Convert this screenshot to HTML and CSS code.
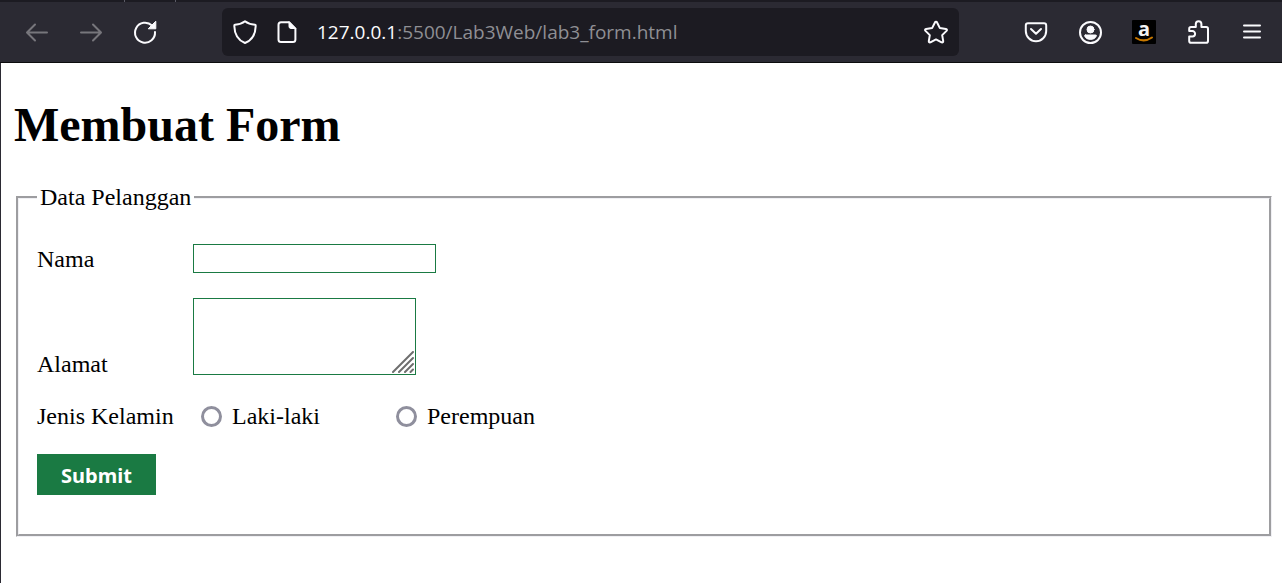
FILE: index.html
```html
<!DOCTYPE html>
<html lang="id">
<head>
<meta charset="utf-8">
<title>Membuat Form</title>
<link rel="stylesheet" href="styles.css">
</head>
<body>
<div class="tabstrip"><div class="tab-edge"></div></div>
<header class="toolbar">
  <nav class="nav-buttons" aria-label="Navigasi">
    <button class="icon-button dim" type="button" aria-label="Kembali">
      <svg width="24" height="24" viewBox="0 0 24 24"><path d="M22 12.500H2.500M10 4.500l-8 8 8 8"/></svg>
    </button>
    <button class="icon-button dim" type="button" aria-label="Maju">
      <svg width="24" height="24" viewBox="0 0 24 24"><path d="M2 12.500h19.500M14 4.500l8 8-8 8"/></svg>
    </button>
    <button class="icon-button" type="button" aria-label="Muat ulang">
      <svg width="24" height="24" viewBox="0 0 24 24"><path d="M19 5.500A10 10 0 1 0 22 12"/><path class="solid" d="M22.800 1.600v7.200h-7.200z"/></svg>
    </button>
  </nav>
  <div class="urlbar">
    <button class="icon-button" type="button" aria-label="Perlindungan">
      <svg width="24" height="24" viewBox="0 0 24 24"><path d="M12 1.200 C9 3.600 5.500 4.400 2 4.700 Q1.200 4.800 1.300 6 C1.500 14 4.500 20 12 23 C19.500 20 22.500 14 22.700 6 Q22.800 4.800 22 4.700 C18.500 4.400 15 3.600 12 1.200Z"/></svg>
    </button>
    <button class="icon-button" type="button" aria-label="Informasi situs">
      <svg width="24" height="24" viewBox="0 0 24 24"><path d="M6 2.200h8l6.400 6.400V19.500a2.500 2.500 0 0 1-2.500 2.500H6a2.500 2.500 0 0 1-2.500-2.500V4.700A2.500 2.500 0 0 1 6 2.200Z"/><path class="solid" d="M14 2v4.500a2 2 0 0 0 2 2h4.500z"/></svg>
    </button>
    <div class="address"><span class="host">127.0.0.1</span>:5500/Lab3Web/lab3_form.html</div>
    <button class="icon-button" type="button" aria-label="Markah">
      <svg width="24" height="24" viewBox="0 0 24 24"><path d="M12 1.800q.800 0 1.200.900l2.700 5.400 6 .900q1.800.500.600 1.900l-4.300 4.200 1 6q.100 1.700-1.600 1.200L12 19.400l-5.600 2.900q-1.700.500-1.600-1.200l1-6-4.300-4.200Q.300 9.500 2.100 9l6-.900 2.700-5.400q.400-.900 1.200-.900Z"/></svg>
    </button>
  </div>
  <div class="extensions">
    <button class="icon-button" type="button" aria-label="Pocket">
      <svg width="24" height="24" viewBox="0 0 24 24"><path d="M4 3.200h16a2.200 2.200 0 0 1 2.200 2.200V11a10.200 10.200 0 0 1-20.400 0V5.400A2.200 2.200 0 0 1 4 3.200ZM7 9l5 4.800L17 9"/></svg>
    </button>
    <button class="icon-button" type="button" aria-label="Akun">
      <svg width="24" height="24" viewBox="0 0 24 24"><circle cx="12.500" cy="12.500" r="10.500"/><circle class="solid" cx="12.500" cy="9.500" r="3.500"/><path class="solid" d="M7.500 15h10q1.200 0 .900 1Q17 19.500 12.500 19.500T6.600 16Q6.300 15 7.500 15Z"/></svg>
    </button>
    <button class="icon-button" type="button" aria-label="Amazon">
      <svg width="24" height="24" viewBox="0 0 24 24"><rect class="amazon-tile" width="24" height="24" rx="1"/><text class="amazon-letter" x="12" y="16" text-anchor="middle">a</text><path class="amazon-smile" d="M4 18q8 5 16-.500"/></svg>
    </button>
    <button class="icon-button" type="button" aria-label="Ekstensi">
      <svg width="24" height="24" viewBox="0 0 24 24"><path d="M5 22.700q-1.800 0-1.800-1.800v-4.400h3.200a2.700 2.700 0 0 0 0-5.400H3.200V8.900q0-1.800 1.800-1.800h4.800V4a2.800 2.800 0 0 1 5.600 0v3.100h4.800q1.800 0 1.800 1.800v12q0 1.800-1.800 1.800Z"/></svg>
    </button>
    <button class="icon-button" type="button" aria-label="Menu">
      <svg width="24" height="24" viewBox="0 0 24 24"><path d="M4 5.500h16M4 11.500h16M4 17.500h16"/></svg>
    </button>
  </div>
</header>
<main class="page">
  <h1 class="title">Membuat Form</h1>
  <form>
    <fieldset class="customer">
      <legend class="caption">Data Pelanggan</legend>
      <div class="rows">
        <div class="row">
          <label class="label" for="nama">Nama</label>
          <input class="field text-input" id="nama" name="nama" type="text">
        </div>
        <div class="row row-address">
          <label class="label" for="alamat">Alamat</label>
          <div class="area-wrap">
            <textarea class="field area" id="alamat" name="alamat"></textarea>
            <svg class="grip" width="22" height="22" viewBox="0 0 22 22"><path d="M1 21 21 1M7 21 21 7M13 21l8-8M18.500 21l2.500-2.500"/></svg>
          </div>
        </div>
        <div class="row" role="radiogroup" aria-labelledby="jk">
          <span class="label" id="jk">Jenis Kelamin</span>
          <label class="choice"><input class="radio" type="radio" name="jk" value="L">Laki-laki</label>
          <label class="choice"><input class="radio" type="radio" name="jk" value="P">Perempuan</label>
        </div>
        <button class="submit" type="submit">Submit</button>
      </div>
    </fieldset>
  </form>
</main>
</body>
</html>
```
FILE: styles.css
```css
* {
  box-sizing: border-box;
}

body {
  display: flex;
  flex-direction: column;
  min-height: 100vh;
  margin: 0;
  background: #fff;
  color: #000;
  font: 24px/28px "Liberation Serif", "Times New Roman", serif;
}

.tabstrip {
  height: 2px;
  background: #1c1b22;
}

.tab-edge {
  width: 52px;
  height: 2px;
  margin-left: 124px;
  border: solid #5b5b66;
  border-width: 0 1px;
}

.toolbar {
  display: flex;
  align-items: center;
  height: 61px;
  background: #2b2a33;
  border-bottom: 1px solid #0c0c0d;
}

.nav-buttons {
  display: flex;
  gap: 30px;
  width: 222px;
  padding-left: 25px;
}

.icon-button {
  display: flex;
  flex: none;
  padding: 0;
  border: 0;
  background: none;
  color: #fbfbfe;
}

.icon-button svg {
  overflow: visible;
  fill: none;
  stroke: currentColor;
  stroke-width: 2;
  stroke-linecap: round;
  stroke-linejoin: round;
}

.icon-button .solid {
  fill: currentColor;
  stroke-width: 1;
}

.icon-button.dim {
  color: #77767c;
}

.urlbar {
  display: flex;
  flex: 1;
  align-items: center;
  gap: 18px;
  min-width: 0;
  height: 48px;
  padding: 0 11px;
  border-radius: 6px;
  background: #1c1b22;
}

.address {
  flex: 1;
  overflow: hidden;
  color: #8f8f94;
  font-family: "Open Sans", "Noto Sans", sans-serif;
  font-size: 19px;
  line-height: 30px;
  white-space: nowrap;
}

.host {
  color: #fbfbfe;
}

.extensions {
  display: flex;
  gap: 30px;
  padding: 0 18px 0 65px;
}

.icon-button .amazon-tile {
  fill: #000;
  stroke: none;
}

.icon-button .amazon-letter {
  fill: #f2f2f2;
  stroke: none;
  font: bold 20px "Open Sans", sans-serif;
}

.icon-button .amazon-smile {
  stroke: #c87800;
}

.page {
  flex: 1;
  padding: 35px 10px 24px 13px;
  border-left: 1px solid #2b2a33;
}

.title {
  margin: 0 0 31px;
  font-size: 48px;
  line-height: 54px;
}

.customer {
  margin: 0 0 0 2px;
  padding: 33px 18px 39px;
  border: 3px groove #f0f0f4;
}

.caption {
  padding: 0 3px;
}

.rows {
  display: flex;
  flex-direction: column;
  align-items: flex-start;
  gap: 24px;
}

.row {
  display: flex;
  align-items: center;
}

.label {
  width: 156px;
}

.field {
  display: block;
  border: 1px solid #1a7a43;
  border-radius: 0;
  background: #fff;
  font: 20px "Open Sans", sans-serif;
}

.text-input {
  width: 243px;
  height: 29px;
  margin-bottom: 1px;
}

.row-address {
  align-items: flex-end;
}

.area-wrap {
  position: relative;
  padding-bottom: 3px;
}

.area {
  width: 223px;
  height: 77px;
  resize: none;
}

.grip {
  position: absolute;
  right: 2px;
  bottom: 5px;
  fill: none;
  stroke: #6e6e6e;
  stroke-width: 2;
  stroke-linecap: round;
  pointer-events: none;
}

.choice {
  display: flex;
  align-items: center;
  gap: 10px;
  width: 195px;
  padding-left: 8px;
}

.radio {
  appearance: none;
  width: 21px;
  height: 21px;
  margin: 0;
  border: 3px solid #8f8f9d;
  border-radius: 50%;
}

.radio:checked {
  background: #1a7a43;
  background-clip: content-box;
  padding: 3px;
}

.submit {
  width: 119px;
  height: 41px;
  padding: 2px 0 0;
  border: 0;
  background: #1a7a43;
  color: #fff;
  font: bold 20px "Noto Sans", "Open Sans", sans-serif;
}
```
